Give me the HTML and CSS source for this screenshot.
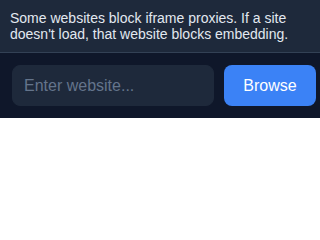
FILE: index.html
```html
<!DOCTYPE html>
<html>
<head>
<meta charset="utf-8">
<link rel="stylesheet" href="styles.css">
</head>
<body>
<div class="notice">Some websites block iframe proxies. If a site doesn't load, that website blocks embedding.</div>
<div class="bar">
  <input class="url" type="text" placeholder="Enter website...">
  <button class="browse">Browse</button>
</div>
</body>
</html>
```
FILE: styles.css
```css
html, body {
  margin: 0;
  padding: 0;
  background: #ffffff;
}
body {
  font-family: "Liberation Sans", Arial, sans-serif;
}
.notice {
  background: #1e293b;
  color: #e2e8f0;
  font-size: 14px;
  line-height: 16px;
  padding: 10px 10px;
  border-bottom: 1px solid #334155;
}
.bar {
  background: #0f172a;
  display: flex;
  gap: 10px;
  padding: 12px 4px 12px 12px;
}
.url {
  flex: 1;
  min-width: 0;
  height: 41px;
  box-sizing: border-box;
  background: #1e293b;
  border: 1px solid #1e293b;
  border-radius: 8px;
  color: #e2e8f0;
  font-family: "Liberation Sans", Arial, sans-serif;
  font-size: 16px;
  padding: 0 11px;
  outline: none;
}
.url::placeholder {
  color: #64748b;
}
.browse {
  width: 92px;
  height: 41px;
  background: #3b82f6;
  color: #ffffff;
  border: none;
  border-radius: 8px;
  font-family: "Liberation Sans", Arial, sans-serif;
  font-size: 16px;
  padding: 0;
}
```
